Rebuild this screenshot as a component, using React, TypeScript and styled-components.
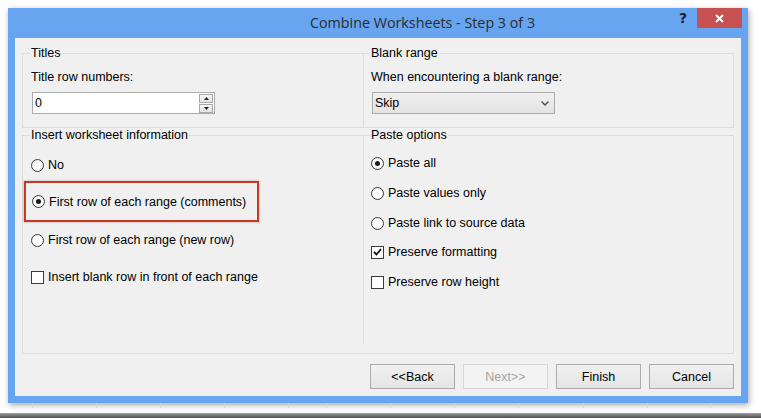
import React from 'react';
import styled, { createGlobalStyle } from 'styled-components';

const GlobalStyle = createGlobalStyle`
  html, body {
    margin: 0;
    padding: 0;
    background: #ffffff;
  }
  body {
    font-family: "Liberation Sans", Arial, sans-serif;
  }
`;

const Page = styled.div`
  width: 761px;
  height: 418px;
  overflow: hidden;
  display: flex;
  flex-direction: column;
  background: #ffffff;
`;

const Window = styled.div`
  margin: 8px 0 0 8px;
  width: 740px;
  height: 395px;
  background: #68a5f1;
  box-shadow: 1px 2px 6px rgba(0, 0, 0, 0.35);
  display: flex;
  flex-direction: column;
  flex-shrink: 0;
`;

const TitleBar = styled.div`
  height: 30px;
  display: flex;
  align-items: flex-start;
  padding-left: 302px;
`;

const Title = styled.div`
  flex: 1;
  font-family: "Open Sans", "Noto Sans", sans-serif;
  font-size: 14.3px;
  line-height: 30px;
  color: #2b2b2b;
  white-space: nowrap;
`;

const HelpButton = styled.div`
  width: 20px;
  height: 20px;
  margin-right: 4px;
  font-family: "DejaVu Sans", sans-serif;
  font-weight: bold;
  font-size: 14px;
  line-height: 20px;
  text-align: center;
  color: #1e1e1e;
`;

const CloseButton = styled.div`
  width: 45px;
  height: 20px;
  margin-right: 6px;
  background: #c75050;
  display: flex;
  align-items: center;
  justify-content: center;
`;

const Body = styled.div`
  flex: 1;
  margin: 0 7px 7px;
  background: #f0f0f0;
  padding: 15px 7px 0 7px;
  display: flex;
  flex-direction: column;
  font-size: 12.5px;
  color: #000;
`;

const SectionRow = styled.div<{ $height: number; $top: number }>`
  height: ${(p) => p.$height}px;
  margin-top: ${(p) => p.$top}px;
  box-sizing: border-box;
  border: 1px solid #dcdcdc;
  display: grid;
  grid-template-columns: 340px 1fr;
`;

const Pane = styled.div<{ $divider?: boolean; $cut?: number }>`
  display: flex;
  flex-direction: column;
  align-items: flex-start;
  padding-left: ${(p) => (p.$divider ? 7 : 8)}px;
  border-left: ${(p) => (p.$divider ? '1px solid #dcdcdc' : 'none')};
  margin-bottom: ${(p) => p.$cut ?? 0}px;
`;

const Caption = styled.div`
  margin: -8px 0 0 -1px;
  padding: 0 1px;
  background: #f0f0f0;
  line-height: 14px;
  white-space: nowrap;
`;

const FieldLabel = styled.div`
  margin-top: 9px;
  line-height: 16px;
  white-space: nowrap;
`;

const SpinInput = styled.div`
  margin: 7px 0 0 1px;
  width: 183px;
  height: 22px;
  box-sizing: border-box;
  border: 1px solid #ababab;
  background: #ffffff;
  display: flex;
  align-items: stretch;
`;

const InputText = styled.div`
  flex: 1;
  padding-left: 2px;
  line-height: 20px;
`;

const Spinner = styled.div`
  width: 14px;
  margin: 0 1px 0 0;
  display: flex;
  flex-direction: column;
  justify-content: center;
  gap: 1px;
`;

const SpinHalf = styled.div`
  height: 9px;
  box-sizing: border-box;
  border: 1px solid #a8a8a8;
  background: linear-gradient(#f6f6f6, #e4e4e4);
  display: flex;
  align-items: center;
  justify-content: center;
`;

const SelectBox = styled.div`
  margin: 7px 0 0 1px;
  width: 183px;
  height: 22px;
  box-sizing: border-box;
  border: 1px solid #acacac;
  background: linear-gradient(#f0f0f0, #e3e3e3);
  display: flex;
  align-items: center;
  justify-content: space-between;
  padding: 0 5px 0 2px;
`;

const Option = styled.div<{ $top: number }>`
  margin-top: ${(p) => p.$top}px;
  height: 16px;
  display: flex;
  align-items: center;
  gap: 4px;
  white-space: nowrap;
`;

const Highlight = styled.div<{ $top: number }>`
  margin: ${(p) => p.$top}px 0 0 -7px;
  width: 235px;
  height: 41px;
  box-sizing: border-box;
  border: 2px solid #c23b24;
  box-shadow: 0 0 2px rgba(150, 40, 20, 0.45);
  display: flex;
  align-items: center;
  padding-left: 6px;
`;

const RadioMark = styled.span<{ $on?: boolean }>`
  width: 13px;
  height: 13px;
  box-sizing: border-box;
  border-radius: 50%;
  border: 1px solid #3a3a3a;
  background: radial-gradient(circle, #ffffff 40%, #e8e8e8 100%);
  display: inline-flex;
  align-items: center;
  justify-content: center;
  flex-shrink: 0;

  &::after {
    content: '';
    width: 5px;
    height: 5px;
    border-radius: 50%;
    background: ${(p) => (p.$on ? '#1a1a1a' : 'transparent')};
  }
`;

const CheckMark = styled.span`
  width: 13px;
  height: 13px;
  box-sizing: border-box;
  border: 1px solid #3a3a3a;
  background: #ffffff;
  display: inline-flex;
  align-items: center;
  justify-content: center;
  flex-shrink: 0;
`;

const ButtonRow = styled.div`
  margin-top: 10px;
  display: flex;
  justify-content: flex-end;
  gap: 8px;
`;

const DialogButton = styled.button<{ $disabled?: boolean }>`
  width: 85px;
  height: 25px;
  box-sizing: border-box;
  padding: 0;
  border: 1px solid ${(p) => (p.$disabled ? '#d6d6d6' : '#acacac')};
  background: ${(p) => (p.$disabled ? '#f3f3f3' : 'linear-gradient(#f0f0f0, #e5e5e5)')};
  color: ${(p) => (p.$disabled ? '#a3a3a3' : '#000')};
  font-family: inherit;
  font-size: 12.5px;
`;

const SheetStrip = styled.div`
  height: 5px;
  display: flex;
  flex-shrink: 0;
`;

const SheetCell = styled.div<{ $w: number }>`
  width: ${(p) => p.$w}px;
  flex-shrink: 0;
  box-sizing: border-box;
  border-right: 1px solid #d8d8d8;
`;

const TaskBar = styled.div`
  margin-top: 5px;
  height: 5px;
  background: linear-gradient(#a0a0a0, #4c4c4c);
  flex-shrink: 0;
`;

const gridLines = [32, 96, 160, 224, 288, 326, 390, 454, 518, 583, 647, 710];

const Radio: React.FC<{ top: number; on?: boolean; children: React.ReactNode }> = ({ top, on, children }) => (
  <Option $top={top}>
    <RadioMark $on={on} />
    {children}
  </Option>
);

const Check: React.FC<{ top: number; on?: boolean; children: React.ReactNode }> = ({ top, on, children }) => (
  <Option $top={top}>
    <CheckMark>
      {on && (
        <svg width="9" height="8" viewBox="0 0 9 8">
          <path d="M1 4 L3.5 6.5 L8 1" fill="none" stroke="#111" strokeWidth="1.8" />
        </svg>
      )}
    </CheckMark>
    {children}
  </Option>
);

const App: React.FC = () => {
  let prev = -1;
  return (
    <Page>
      <GlobalStyle />
      <Window>
        <TitleBar>
          <Title>Combine Worksheets - Step 3 of 3</Title>
          <HelpButton>?</HelpButton>
          <CloseButton>
            <svg width="9" height="9" viewBox="0 0 9 9">
              <path d="M1 1 L8 8 M8 1 L1 8" stroke="#fff" strokeWidth="2" />
            </svg>
          </CloseButton>
        </TitleBar>
        <Body>
          <SectionRow $height={75} $top={0}>
            <Pane>
              <Caption>Titles</Caption>
              <FieldLabel>Title row numbers:</FieldLabel>
              <SpinInput>
                <InputText>0</InputText>
                <Spinner>
                  <SpinHalf>
                    <svg width="5" height="3" viewBox="0 0 5 3">
                      <path d="M0 3 L2.5 0 L5 3 Z" fill="#222" />
                    </svg>
                  </SpinHalf>
                  <SpinHalf>
                    <svg width="5" height="3" viewBox="0 0 5 3">
                      <path d="M0 0 L2.5 3 L5 0 Z" fill="#222" />
                    </svg>
                  </SpinHalf>
                </Spinner>
              </SpinInput>
            </Pane>
            <Pane $divider>
              <Caption>Blank range</Caption>
              <FieldLabel>When encountering a blank range:</FieldLabel>
              <SelectBox>
                <span>Skip</span>
                <svg width="8" height="5" viewBox="0 0 8 5">
                  <path d="M0.5 0.5 L4 4 L7.5 0.5" fill="none" stroke="#555" strokeWidth="1.5" />
                </svg>
              </SelectBox>
            </Pane>
          </SectionRow>
          <SectionRow $height={219} $top={7}>
            <Pane>
              <Caption>Insert worksheet information</Caption>
              <Radio top={15}>No</Radio>
              <Highlight $top={8}>
                <Option $top={0}>
                  <RadioMark $on />
                  First row of each range (comments)
                </Option>
              </Highlight>
              <Radio top={10}>First row of each range (new row)</Radio>
              <Check top={21}>Insert blank row in front of each range</Check>
            </Pane>
            <Pane $divider $cut={9}>
              <Caption>Paste options</Caption>
              <Radio top={13} on>Paste all</Radio>
              <Radio top={14}>Paste values only</Radio>
              <Radio top={14}>Paste link to source data</Radio>
              <Check top={13} on>Preserve formatting</Check>
              <Check top={14}>Preserve row height</Check>
            </Pane>
          </SectionRow>
          <ButtonRow>
            <DialogButton>&lt;&lt;Back</DialogButton>
            <DialogButton $disabled>Next&gt;&gt;</DialogButton>
            <DialogButton>Finish</DialogButton>
            <DialogButton>Cancel</DialogButton>
          </ButtonRow>
        </Body>
      </Window>
      <SheetStrip>
        {gridLines.map((x) => {
          const w = x - prev;
          prev = x;
          return <SheetCell key={x} $w={w} />;
        })}
      </SheetStrip>
      <TaskBar />
    </Page>
  );
};

export default App;
